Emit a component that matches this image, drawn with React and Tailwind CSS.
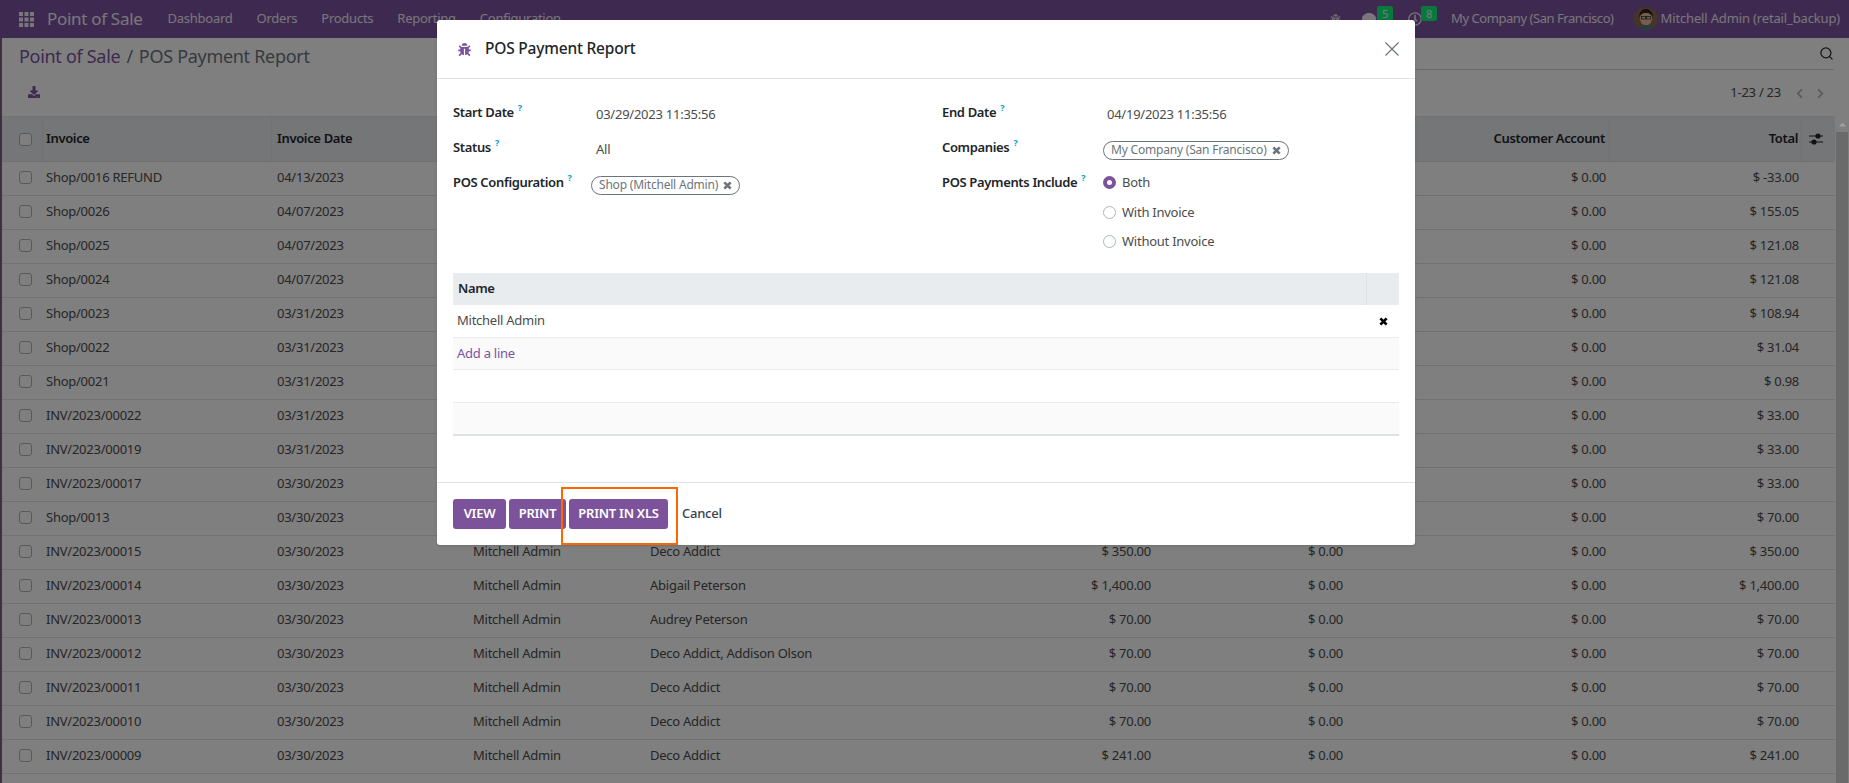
import React from "react";
import {
    FaBug,
    FaComment,
    FaRegClock,
    FaDownload,
    FaChevronLeft,
    FaChevronRight,
    FaCaretUp,
} from "react-icons/fa";
import { Search } from "lucide-react";

const rows = [
    ["Shop/0016 REFUND", "04/13/2023", "", "", "$ -33.00"],
    ["Shop/0026", "04/07/2023", "", "", "$ 155.05"],
    ["Shop/0025", "04/07/2023", "", "", "$ 121.08"],
    ["Shop/0024", "04/07/2023", "", "", "$ 121.08"],
    ["Shop/0023", "03/31/2023", "", "", "$ 108.94"],
    ["Shop/0022", "03/31/2023", "", "", "$ 31.04"],
    ["Shop/0021", "03/31/2023", "", "", "$ 0.98"],
    ["INV/2023/00022", "03/31/2023", "", "", "$ 33.00"],
    ["INV/2023/00019", "03/31/2023", "", "", "$ 33.00"],
    ["INV/2023/00017", "03/30/2023", "", "", "$ 33.00"],
    ["Shop/0013", "03/30/2023", "", "", "$ 70.00"],
    ["INV/2023/00015", "03/30/2023", "Deco Addict", "$ 350.00", "$ 350.00"],
    ["INV/2023/00014", "03/30/2023", "Abigail Peterson", "$ 1,400.00", "$ 1,400.00"],
    ["INV/2023/00013", "03/30/2023", "Audrey Peterson", "$ 70.00", "$ 70.00"],
    ["INV/2023/00012", "03/30/2023", "Deco Addict, Addison Olson", "$ 70.00", "$ 70.00"],
    ["INV/2023/00011", "03/30/2023", "Deco Addict", "$ 70.00", "$ 70.00"],
    ["INV/2023/00010", "03/30/2023", "Deco Addict", "$ 70.00", "$ 70.00"],
    ["INV/2023/00009", "03/30/2023", "Deco Addict", "$ 241.00", "$ 241.00"],
];

const Check = () => (
    <span className="block w-[13px] h-[13px] rounded-[3px] border border-[#adb5bd] bg-white" />
);

const Hint = () => (
    <sup className="ml-[4px] text-[9px] font-bold text-[#00a0c6] relative -top-[6px]">?</sup>
);

const Label = ({ children }) => (
    <div className="h-[35px] flex items-center font-semibold tracking-[-0.35px] text-[#212529]">
        <span>
            {children}
            <Hint />
        </span>
    </div>
);

const BoldX = ({ className }) => (
    <svg viewBox="0 0 10 10" className={className} fill="none" stroke="currentColor" strokeWidth="3">
        <path d="M1.5 1.5l7 7M8.5 1.5l-7 7" />
    </svg>
);

const Tag = ({ children }) => (
    <span className="inline-flex items-center gap-[5px] h-[19px] px-[7px] rounded-full border border-[#6c757d] text-[#6c757d] text-[12px] tracking-[-0.2px]">
        {children}
        <BoldX className="w-[9px] h-[9px]" />
    </span>
);

const Radio = ({ checked, children }) => (
    <div className="h-[29.5px] flex items-center gap-[6px] text-[#4c4c4c]">
        {checked ? (
            <span className="w-[13px] h-[13px] rounded-full border-[4px] border-[#7c539b] bg-white" />
        ) : (
            <span className="w-[13px] h-[13px] rounded-full border border-[#adb5bd] bg-white" />
        )}
        {children}
    </div>
);

const GridIcon = () => (
    <svg width="15" height="15" viewBox="0 0 15 15" fill="currentColor">
        {[0, 5.5, 11].map((y) =>
            [0, 5.5, 11].map((x) => (
                <rect key={x + "-" + y} x={x} y={y} width="4" height="4" />
            ))
        )}
    </svg>
);

const SlidersIcon = () => (
    <svg width="14" height="12" viewBox="0 0 14 12" fill="currentColor">
        <rect x="0" y="2.5" width="14" height="1" />
        <rect x="0" y="8.5" width="14" height="1" />
        <circle cx="9" cy="3" r="2.6" />
        <circle cx="5" cy="9" r="2.6" />
    </svg>
);

const Avatar = () => (
    <svg width="24" height="24" viewBox="0 0 24 24" className="rounded-full">
        <rect width="24" height="24" fill="#8d6b4a" />
        <ellipse cx="12" cy="11.5" rx="6" ry="7" fill="#e7bda0" />
        <path d="M5 11c0-7 4-9 7-9s7 2 7 9c-1-3-3-5-7-5s-6 2-7 5z" fill="#2e221b" />
        <rect x="7.5" y="9.5" width="4" height="2.5" fill="none" stroke="#222" strokeWidth="0.7" />
        <rect x="12.5" y="9.5" width="4" height="2.5" fill="none" stroke="#222" strokeWidth="0.7" />
        <path d="M3 24c1-5 5-6 9-6s8 1 9 6z" fill="#5b7083" />
    </svg>
);

const colClass =
    "grid grid-cols-[41px_229px_197px_177px_300px_209px_192px_263px_192px_1fr]";

const App = () => {
    return (
        <div className="relative h-screen overflow-hidden flex flex-col bg-white text-[13px] tracking-[-0.25px] text-[#4c4c4c] font-['Noto_Sans',sans-serif]">
            {/* navbar */}
            <div className="h-[38px] shrink-0 flex items-center bg-[#7c52a0] text-white/90 pl-[19px] pr-[9px]">
                <GridIcon />
                <span className="ml-[13px] text-[17px] tracking-[-0.3px] mr-[25px]">Point of Sale</span>
                <div className="flex gap-[24px]">
                    <span>Dashboard</span>
                    <span>Orders</span>
                    <span>Products</span>
                    <span>Reporting</span>
                    <span>Configuration</span>
                </div>
                <div className="ml-auto flex items-center">
                    <FaBug className="w-[11px] h-[11px] text-white/70" />
                    <div className="relative ml-[21px] w-[46px]">
                        <FaComment className="w-[14px] h-[14px]" />
                        <span className="absolute -top-[6px] left-[15px] w-[16px] h-[15px] rounded-[2px] bg-[#10f078] text-[11px] leading-[15px] text-center">5</span>
                    </div>
                    <div className="relative w-[43px]">
                        <FaRegClock className="w-[14px] h-[14px]" />
                        <span className="absolute -top-[6px] left-[13px] w-[16px] h-[15px] rounded-[2px] bg-[#10f078] text-[11px] leading-[15px] text-center">8</span>
                    </div>
                    <span className="tracking-[-0.45px]">My Company (San Francisco)</span>
                    <span className="ml-[20px] mr-[3px] flex">
                        <Avatar />
                    </span>
                    <span className="tracking-[-0.15px]">Mitchell Admin (retail_backup)</span>
                </div>
            </div>

            {/* control panel */}
            <div className="h-[78px] shrink-0 border-l-2 border-[#7c6080]">
                <div className="h-[32px] flex items-center pl-[17px] pr-[15px]">
                    <div className="flex items-center pt-[4px]">
                        <span className="text-[18px] tracking-[-0.3px] text-[#7c52a0]">Point of Sale</span>
                        <span className="text-[18px] mx-[6px] text-[#6c757d]">/</span>
                        <span className="text-[18px] tracking-[-0.3px] text-[#6c757d]">POS Payment Report</span>
                    </div>
                    <div className="ml-auto w-[910px] h-[32px] border-b border-[#ced4da] flex items-center justify-end">
                        <Search className="w-[15px] h-[15px] text-[#212529]" />
                    </div>
                </div>
                <div className="h-[46px] flex items-center pl-[26px] pr-[23px]">
                    <FaDownload className="w-[12px] h-[12px] mb-[2px] text-[#7c52a0]" />
                    <span className="ml-auto">1-23 / 23</span>
                    <FaChevronLeft className="ml-[13px] w-[11px] h-[11px] text-[#adb5bd]" />
                    <FaChevronRight className="ml-[10px] w-[11px] h-[11px] text-[#adb5bd]" />
                </div>
            </div>

            {/* list */}
            <div className="flex-1 flex min-h-0 border-l-2 border-[#7c6080]">
                <div className="flex-1 min-w-0">
                    <div className={colClass + " h-[46px] items-stretch bg-[#e9ecef] border-y border-[#dee2e6] font-semibold tracking-[-0.35px] text-[#212529]"}>
                        <div className="flex items-center pl-[17px] border-r border-[#dee2e6]">
                            <Check />
                        </div>
                        <div className="flex items-center pl-[3px] border-r border-[#dee2e6]">Invoice</div>
                        <div className="flex items-center pl-[5px] border-r border-[#dee2e6]">Invoice Date</div>
                        <div className="border-r border-[#dee2e6]" />
                        <div className="border-r border-[#dee2e6]" />
                        <div className="border-r border-[#dee2e6]" />
                        <div className="border-r border-[#dee2e6]" />
                        <div className="flex items-center justify-end pr-[4px] border-r border-[#dee2e6]">Customer Account</div>
                        <div className="flex items-center justify-end pr-[3px] border-r border-[#dee2e6]">Total</div>
                        <div className="flex items-center pl-[7px]">
                            <SlidersIcon />
                        </div>
                    </div>
                    {rows.map((r) => (
                        <div key={r[0]} className={colClass + " h-[34px] pb-[2px] items-center border-b border-[#dee2e6]"}>
                            <div className="pl-[17px]">
                                <Check />
                            </div>
                            <div className="pl-[3px]">{r[0]}</div>
                            <div className="pl-[5px]">{r[1]}</div>
                            {/* rows above the dialog's bottom edge have these cells covered */}
                            <div className="pl-[4px]">{r[2] && "Mitchell Admin"}</div>
                            <div className="pl-[4px]">{r[2]}</div>
                            <div className="text-right pr-[4px]">{r[3]}</div>
                            <div className="text-right pr-[4px]">{r[2] && "$ 0.00"}</div>
                            <div className="text-right pr-[4px]">$ 0.00</div>
                            <div className="text-right pr-[3px]">{r[4]}</div>
                            <div />
                        </div>
                    ))}
                </div>
                <div className="w-[14px] shrink-0 flex flex-col bg-white">
                    <div className="relative z-10 h-[16px] flex items-center justify-center text-[#a0a0a0]">
                        <FaCaretUp className="w-[11px] h-[11px]" />
                    </div>
                    <div className="flex-1 mx-[1px] bg-[#d4d4d4]" />
                </div>
            </div>

            {/* overlay */}
            <div className="absolute inset-0 bg-black/50" />

            {/* dialog */}
            <div className="absolute left-[437px] top-[20px] w-[978px] h-[525px] flex flex-col bg-white rounded-[3px] shadow">
                <div className="h-[59px] shrink-0 flex items-center pl-[21px] pr-[16px] border-b border-[#dee2e6]">
                    <FaBug className="w-[13px] h-[13px] text-[#7c52a0]" />
                    <span className="ml-[14px] text-[15.5px] tracking-[-0.2px] font-medium text-[#212529]">POS Payment Report</span>
                    <svg viewBox="0 0 14 14" className="ml-auto w-[14px] h-[14px] text-[#6c757d]" fill="none" stroke="currentColor" strokeWidth="1.2">
                        <path d="M0.5 0.5l13 13M13.5 0.5l-13 13" />
                    </svg>
                </div>
                <div className="flex-1 px-[16px] pt-[16px]">
                    <div className="grid grid-cols-[138px_351px_161px_1fr] items-start">
                        <Label>Start Date</Label>
                        <div className="h-[35px] flex items-center pl-[5px] pt-[4px]">03/29/2023 11:35:56</div>
                        <Label>End Date</Label>
                        <div className="h-[35px] flex items-center pl-[4px] pt-[4px]">04/19/2023 11:35:56</div>
                        <Label>Status</Label>
                        <div className="h-[35px] flex items-center pl-[5px] pt-[4px]">All</div>
                        <Label>Companies</Label>
                        <div className="h-[35px] flex items-center pt-[5px]">
                            <Tag>My Company (San Francisco)</Tag>
                        </div>
                        <Label>POS Configuration</Label>
                        <div className="h-[35px] flex items-center pt-[5px]">
                            <Tag>Shop (Mitchell Admin)</Tag>
                        </div>
                        <Label>POS Payments Include</Label>
                        <div className="pt-[3px]">
                            <Radio checked>Both</Radio>
                            <Radio>With Invoice</Radio>
                            <Radio>Without Invoice</Radio>
                        </div>
                    </div>
                    <div className="mt-[16.5px]">
                        <div className="h-[32px] flex bg-[#e9ecef] font-semibold tracking-[-0.35px] text-[#212529]">
                            <div className="flex-1 flex items-center pl-[5px]">Name</div>
                            <div className="w-[33px] border-l border-[#dee2e6]" />
                        </div>
                        <div className="h-[33px] flex items-center justify-between pl-[4px] pr-[11px] border-b border-[#e9ecef]">
                            <span>Mitchell Admin</span>
                            <BoldX className="w-[9px] h-[9px] text-black" />
                        </div>
                        <div className="h-[32px] flex items-center pl-[4px] bg-[#fafafa] border-b border-[#e9ecef] text-[#7c52a0]">
                            Add a line
                        </div>
                        <div className="h-[33px] border-b border-[#e9ecef]" />
                        <div className="h-[33px] bg-[#fafafa] border-b-2 border-[#dee2e6]" />
                    </div>
                </div>
                <div className="h-[63px] shrink-0 flex items-center gap-[3px] px-[16px] border-t border-[#dee2e6]">
                    <button className="h-[30px] w-[53px] rounded-[3px] bg-[#7c539b] text-white font-semibold">VIEW</button>
                    <button className="h-[30px] w-[57px] rounded-[3px] bg-[#7c539b] text-white font-semibold">PRINT</button>
                    <button className="h-[30px] w-[99px] rounded-[3px] bg-[#7c539b] text-white font-semibold">PRINT IN XLS</button>
                    <span className="ml-[11px] font-medium text-[#374151]">Cancel</span>
                </div>
            </div>

            {/* highlight box from the screenshot */}
            <div className="absolute left-[561px] top-[487px] w-[117px] h-[58px] border-2 border-[#ff6600]" />
        </div>
    );
};

export default App;
